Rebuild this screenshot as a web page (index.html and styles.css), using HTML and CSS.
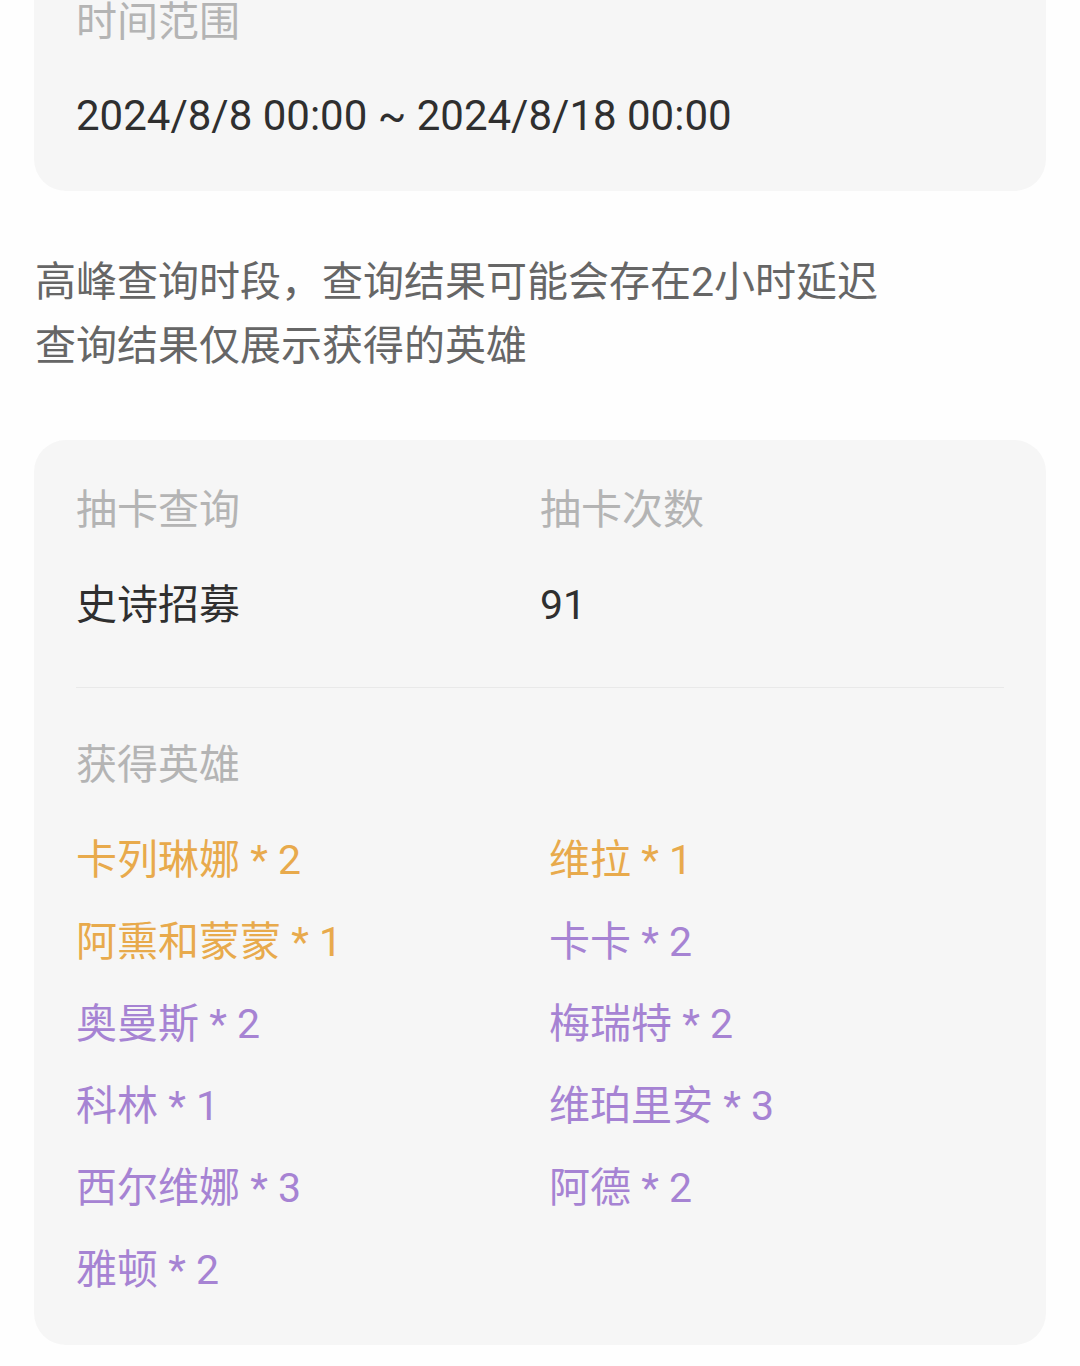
FILE: index.html
```html
<!DOCTYPE html>
<html lang="zh-CN">
<head>
<meta charset="utf-8">
<title>抽卡查询</title>
<link rel="stylesheet" href="styles.css">
</head>
<body>
<div class="page">
  <section class="card card-time">
    <div class="label">时间范围</div>
    <div class="date">2024/8/8 00:00 ~ 2024/8/18 00:00</div>
  </section>

  <div class="note">
    <p>高峰查询时段，查询结果可能会存在2小时延迟</p>
    <p>查询结果仅展示获得的英雄</p>
  </div>

  <section class="card card-result">
    <div class="info-grid">
      <div class="label">抽卡查询</div>
      <div class="label">抽卡次数</div>
      <div class="value">史诗招募</div>
      <div class="value">91</div>
    </div>
    <div class="divider"></div>
    <div class="label heroes-label">获得英雄</div>
    <div class="hero-grid">
      <div class="hero gold">卡列琳娜 * 2</div>
      <div class="hero gold">维拉 * 1</div>
      <div class="hero gold">阿熏和蒙蒙 * 1</div>
      <div class="hero purple">卡卡 * 2</div>
      <div class="hero purple">奥曼斯 * 2</div>
      <div class="hero purple">梅瑞特 * 2</div>
      <div class="hero purple">科林 * 1</div>
      <div class="hero purple">维珀里安 * 3</div>
      <div class="hero purple">西尔维娜 * 3</div>
      <div class="hero purple">阿德 * 2</div>
      <div class="hero purple">雅顿 * 2</div>
    </div>
  </section>
</div>
</body>
</html>
```

FILE: styles.css
```css
html, body {
  margin: 0;
  padding: 0;
  background: #fefefe;
}

body {
  font-family: Roboto, "Noto Sans CJK SC", sans-serif;
  font-size: 41px;
  overflow: hidden;
}

.page {
  width: 1080px;
  height: 1366px;
  overflow: hidden;
}

.card {
  background: #f6f6f6;
  border-radius: 32px;
  margin: 0 34px;
  padding: 0 42px;
}

.card-time {
  margin-top: -48px;
  padding-top: 42px;
  padding-bottom: 47px;
}

.label {
  color: #b4b4b4;
  line-height: 56px;
}

.date {
  color: #2f2f2f;
  font-size: 42px;
  line-height: 56px;
  margin-top: 38px;
}

.note {
  margin: 59px 0 62px;
  padding-left: 35px;
  color: #666666;
  font-size: 41px;
  line-height: 64px;
}

.note p {
  margin: 0;
}

.card-result {
  padding-top: 42px;
  padding-bottom: 34px;
}

.info-grid {
  display: grid;
  grid-template-columns: 1fr 1fr;
  row-gap: 39px;
}

.value {
  color: #2f2f2f;
  line-height: 56px;
}

.divider {
  height: 1px;
  background: #e9e9e9;
  margin: 54px 0 0;
}

.heroes-label {
  margin-top: 49px;
}

.hero-grid {
  margin-top: 26px;
  display: grid;
  grid-template-columns: 1fr 1fr;
  column-gap: 18px;
}

.hero {
  line-height: 82px;
  white-space: nowrap;
}

.gold {
  color: #e8aa4c;
}

.purple {
  color: #a683d3;
}
```
